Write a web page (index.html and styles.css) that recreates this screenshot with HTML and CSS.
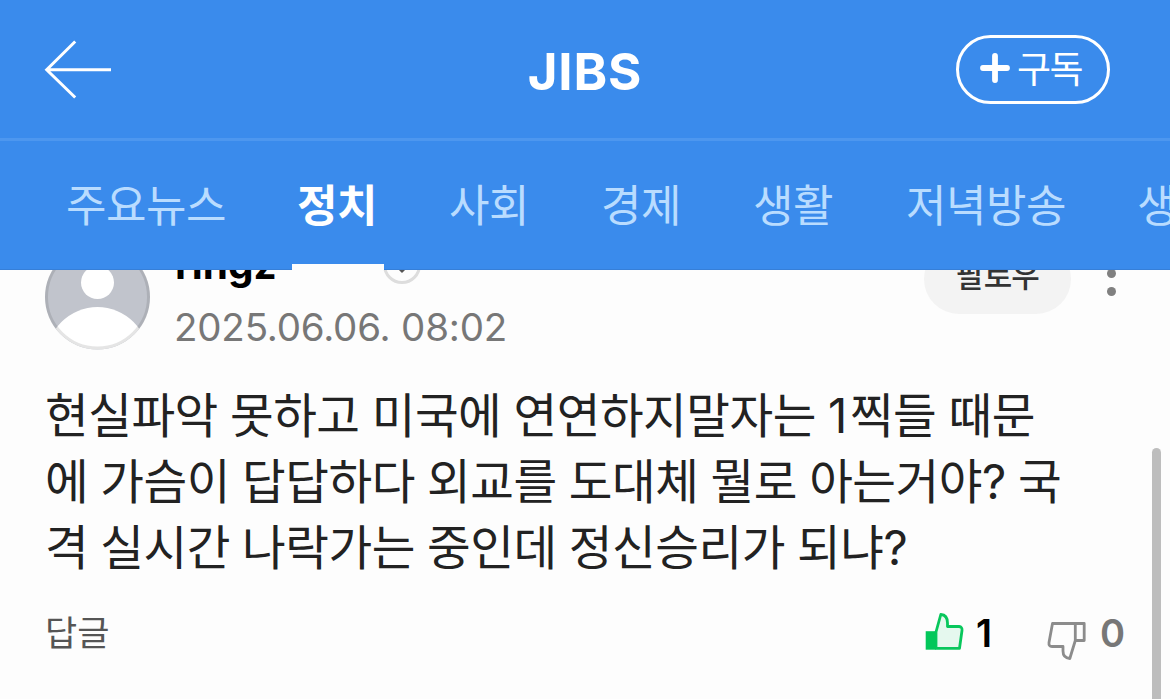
FILE: index.html
```html
<!DOCTYPE html>
<html lang="ko">
<head>
<meta charset="utf-8">
<title>JIBS</title>
<link rel="stylesheet" href="styles.css">
</head>
<body>
<header class="header">
  <div class="topbar">
    <svg class="back" width="68" height="60" viewBox="0 0 68 60" fill="none" stroke="#fff" stroke-width="3"><path d="M67 29.700H2.500M31.200 1.500L2.700 29.700L31.200 57.500"/></svg>
    <h1 class="title">JIBS</h1>
    <button class="subscribe">
      <svg width="30" height="30" viewBox="0 0 30 30" stroke="#fff" stroke-width="5.800" stroke-linecap="round"><path d="M15 3V27M3 15H27"/></svg>
      <span>구독</span>
    </button>
  </div>
  <nav class="tabs">
    <a class="tab tab-wide">주요뉴스</a>
    <a class="tab active">정치</a>
    <a class="tab">사회</a>
    <a class="tab">경제</a>
    <a class="tab">생활</a>
    <a class="tab tab-wide">저녁방송</a>
    <a class="tab">생</a>
  </nav>
</header>
<main class="content">
  <article class="comment">
    <div class="author">
      <svg class="avatar" width="106" height="106" viewBox="0 0 106 106">
        <defs><clipPath id="face"><circle cx="52.500" cy="53" r="52.500"/></clipPath></defs>
        <g clip-path="url(#face)"><rect width="106" height="106" fill="#c1c4cc"/><circle cx="52.500" cy="38.500" r="16.500" fill="#fff"/><circle cx="52.500" cy="114" r="51" fill="#fff"/></g>
        <circle cx="52.500" cy="53" r="51" fill="none" stroke="#000" stroke-opacity=".1" stroke-width="3"/>
      </svg>
      <div class="meta">
        <div class="name-row">
          <span class="name">ringz</span>
          <svg class="expand" width="38" height="38" viewBox="0 0 38 38" fill="none"><circle cx="19" cy="19" r="17.500" stroke="#ddd" stroke-width="3"/><path d="M13 19L19 25L25 19" stroke="#555" stroke-width="3"/></svg>
        </div>
        <time class="date">2025.06.06. 08:02</time>
      </div>
      <button class="follow">팔로우</button>
      <div class="more"><i></i><i></i><i></i></div>
    </div>
    <p class="text">현실파악 못하고 미국에 연연하지말자는 <span class="digit">1</span>찍들 때문<br>에 가슴이 답답하다 외교를 도대체 뭘로 아는거야? 국<br>격 실시간 나락가는 중인데 정신승리가 되냐?</p>
    <footer class="actions">
      <span class="reply">답글</span>
      <span class="vote up">
        <svg width="40" height="40" viewBox="0 0 40 40"><path d="M11 20L15.800 2.500Q22.500 3 22.500 11V14.500H34Q37.500 15 37 18.500L34.500 36.300H11Z" fill="#e5f8ee" stroke="#08c75c" stroke-width="2.800" stroke-linejoin="round"/><path d="M.7 19.200H11V37.700H.7Z" fill="#03c75a"/></svg>
        <b>1</b>
      </span>
      <span class="vote down">
        <svg width="40" height="40" viewBox="0 0 40 40" fill="none" stroke="#8c8c8c" stroke-width="2.800" stroke-linejoin="round"><path d="M28.300 3.500H5.500L2 22.500Q1.500 26.500 5 26.500H16V31Q16 38 22.800 38.500L28.300 20.500V3.500H37.200V20.500H28.300"/></svg>
        <b>0</b>
      </span>
    </footer>
  </article>
</main>
<div class="scrollbar"></div>
</body>
</html>
```

FILE: styles.css
```css
* { box-sizing: border-box; }
body {
  margin: 0;
  width: 1170px;
  height: 699px;
  overflow: hidden;
  position: relative;
  background: #fdfdfd;
  font-family: Inter, "Noto Sans CJK KR", sans-serif;
}
button { border: 0; padding: 0; font-family: inherit; }
.header {
  position: relative;
  z-index: 2;
  height: 270px;
  background: #3a8bec;
  color: #fff;
}
.topbar {
  display: grid;
  grid-template-columns: 1fr auto 1fr;
  align-items: center;
  height: 141px;
  padding: 0 60px 2px 44px;
  border-bottom: 3px solid #4d97ef;
}
.back { margin-top: 3px; }
.title {
  margin: 8px 0 0 16px;
  font-size: 51px;
  line-height: 60px;
  font-weight: 700;
  letter-spacing: .8px;
}
.subscribe {
  justify-self: end;
  display: flex;
  align-items: center;
  gap: 7px;
  width: 154px;
  height: 69px;
  padding-left: 21px;
  margin-top: 3px;
  border: 3px solid #fff;
  border-radius: 35px;
  background: none;
  color: #fff;
  font-size: 37px;
  line-height: 50px;
  letter-spacing: -1.5px;
}
.subscribe svg { margin-bottom: 3px; }
.tabs {
  display: flex;
  gap: 72px;
  height: 129px;
  padding-left: 66px;
  overflow: hidden;
  background: linear-gradient(#367fd8, #367fd8) bottom / 100% 1px no-repeat;
}
.tab {
  flex: 0 0 80px;
  height: 129px;
  text-align: left;
  white-space: nowrap;
  font-size: 44px;
  line-height: 130px;
  letter-spacing: -.5px;
  text-indent: -1px;
  color: #b9dcff;
}
.tab-wide { flex-basis: 160px; text-indent: 0; }
.tab.active {
  flex-basis: 92px;
  margin: 0 -6px;
  padding-left: 6px;
  color: #fff;
  font-weight: 700;
  border-bottom: 6px solid #fdfdfd;
}
.content { margin-top: -26px; padding: 0 45px; }
.author { display: flex; height: 106px; }
.avatar { margin-right: 24px; }
.meta { width: 749px; }
.name-row { display: flex; align-items: center; height: 58px; margin-top: -8px; }
.name { width: 208px; font-size: 40.5px; line-height: 58px; font-weight: 700; color: #000; }
.expand { margin-top: -1px; }
.date { display: block; margin: 8px 0 0 -1px; font-size: 38.5px; line-height: 50px; color: #777; letter-spacing: -.2px; }
.follow {
  width: 147px;
  height: 70px;
  padding-bottom: 7px;
  border-radius: 35px;
  background: #f3f3f3;
  color: #333;
  font-size: 31px;
  font-weight: 500;
  line-height: 63px;
  letter-spacing: -.8px;
}
.more { display: flex; flex-direction: column; gap: 9px; margin: 7px 0 0 36px; }
.more i { width: 9px; height: 9px; border-radius: 50%; background: #808080; }
.text {
  margin: 33px 0 0;
  font-size: 47.5px;
  line-height: 66px;
  letter-spacing: -.5px;
  word-spacing: -.7px;
  white-space: nowrap;
  color: #222;
}
.digit { letter-spacing: 2.5px; }
.actions { display: flex; align-items: center; height: 60px; margin-top: 22px; }
.reply { width: 880px; font-size: 35px; line-height: 60px; color: #555; }
.vote { display: flex; align-items: center; font-size: 38px; }
.vote b { font-weight: 600; }
.up { width: 122px; gap: 11px; color: #000; }
.up svg { margin-bottom: 3px; }
.down { gap: 13px; color: #777; }
.down svg { margin-top: 14px; }
.scrollbar {
  position: absolute;
  right: 9px;
  top: 448px;
  width: 9px;
  height: 270px;
  border-radius: 5px;
  background: #bdbdbd;
}
```
